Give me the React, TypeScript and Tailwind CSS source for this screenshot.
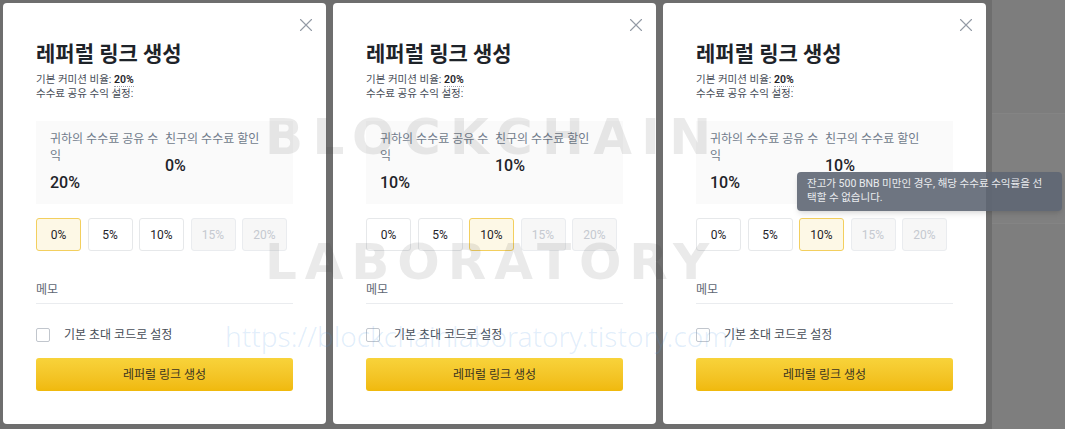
import React from 'react';

type PanelProps = {
    you: string;
    friend: string;
    selected: number;
};

const rates = ['0%', '5%', '10%', '15%', '20%'];

function CloseIcon() {
    return (
        <svg width="24" height="24" viewBox="0 0 24 24" className="absolute right-[8px] top-[10px]">
            <path d="M6.5 6.5L17.5 17.5M17.5 6.5L6.5 17.5" stroke="#939aa5" strokeWidth="1.1" strokeLinecap="round" />
        </svg>
    );
}

function Panel({ you, friend, selected }: PanelProps) {
    return (
        <div className="relative w-[323px] h-[421px] shrink-0 rounded-[4px] bg-white px-[33px] pt-[37px]">
            <CloseIcon />
            <h2 className="text-[21px] leading-[28px] font-bold text-[#1e2329]">레퍼럴 링크 생성</h2>
            <div className="mt-[5px] text-[10.5px] leading-[14px] text-[#474d57]">
                <p>
                    기본 커미션 비율:{' '}
                    <span className="font-semibold text-[#1e2329] border-b border-dotted border-[#9aa1ab]">20%</span>
                </p>
                <p>수수료 공유 수익 설정:</p>
            </div>

            {/* share summary */}
            <div className="mt-[20px] flex bg-[#fafafa] pl-[14px] pt-[10px] pb-[10px]">
                <div className="w-[115px] shrink-0 pr-[4px]">
                    <p className="break-all text-[12px] leading-[17px] text-[#707a8a]">귀하의 수수료 공유 수익</p>
                    <p className="mt-[7px] text-[16px] leading-[22px] font-medium text-[#1e2329]">{you}</p>
                </div>
                <div>
                    <p className="text-[12px] leading-[17px] text-[#707a8a]">친구의 수수료 할인</p>
                    <p className="mt-[7px] text-[16px] leading-[22px] font-medium text-[#1e2329]">{friend}</p>
                </div>
            </div>

            {/* rate buttons */}
            <div className="mt-[14px] flex gap-[6.5px]">
                {rates.map((r, i) => {
                    const disabled = i > 2;
                    const active = i === selected;
                    return (
                        <div
                            key={r}
                            className={
                                active
                                    ? 'w-[45px] h-[33px] rounded-[3px] border border-[#f3cf5e] bg-[#fdf8e6] flex items-center justify-center text-[12px] text-[#1e2329]'
                                    : disabled
                                    ? 'w-[45px] h-[33px] rounded-[3px] border border-[#eaecef] bg-[#f7f7f7] flex items-center justify-center text-[12px] text-[#c5c9d0]'
                                    : 'w-[45px] h-[33px] rounded-[3px] border border-[#e6e8ea] bg-white flex items-center justify-center text-[12px] text-[#1e2329]'
                            }
                        >
                            {r}
                        </div>
                    );
                })}
            </div>

            <div className="mt-[30px] pb-[4px] border-b border-[#eaecef] text-[12px] leading-[18px] text-[#5e6673]">메모</div>

            <div className="mt-[24px] flex items-center h-[14px]">
                <div className="w-[14px] h-[14px] rounded-[2px] border border-[#c1c6cd] bg-white" />
                <span className="ml-[14px] text-[12px] leading-[14px] text-[#474d57]">기본 초대 코드로 설정</span>
            </div>

            <button className="mt-[16px] w-full h-[33px] rounded-[3px] bg-gradient-to-b from-[#f8d33a] to-[#f0b90b] text-[12px] text-[#3a3320]">
                레퍼럴 링크 생성
            </button>
        </div>
    );
}

export default function App() {
    return (
        <div className="relative w-[1065px] h-[429px] overflow-hidden bg-[#6e6e6e] flex font-['Roboto','Noto_Sans_CJK_KR',sans-serif]">
            <div className="flex gap-[7px] pl-[3px] pt-[3px]">
                <Panel you="20%" friend="0%" selected={0} />
                <Panel you="10%" friend="10%" selected={2} />
                <Panel you="10%" friend="10%" selected={2} />
            </div>
            <div className="ml-[6px] flex-1 flex flex-col bg-[#7f7f7f]">
                <div className="h-[114px] border-b border-[#848484] bg-[#7d7d7d]" />
                <div className="h-[110px] border-b border-[#848484] bg-[#808080]" />
                <div className="flex-1 bg-[#7e7e7e]" />
            </div>

            {/* watermark */}
            <div className="pointer-events-none absolute left-[265px] top-[112px] text-[50px] leading-none font-bold tracking-[9.4px] text-[rgba(60,60,60,0.11)] font-['DejaVu_Sans',sans-serif] whitespace-nowrap">
                BLOCKCHAIN
            </div>
            <div className="pointer-events-none absolute left-[265px] top-[237px] text-[50px] leading-none font-bold tracking-[7.9px] text-[rgba(60,60,60,0.11)] font-['DejaVu_Sans',sans-serif] whitespace-nowrap">
                LABORATORY
            </div>
            <div className="pointer-events-none absolute left-[225px] top-[322px] text-[28px] leading-none font-light text-[rgba(70,150,230,0.16)] font-['Noto_Sans',sans-serif] whitespace-nowrap">
                https://blockchainlaboratory.tistory.com/
            </div>

            {/* tooltip */}
            <div className="absolute left-[797px] top-[172px] w-[265px] h-[39px] rounded-[4px] bg-[#5e6673]/90 px-[10px] pt-[5px] text-[10.5px] leading-[14px] text-[#eaecef] whitespace-nowrap shadow-md">
                잔고가 500 BNB 미만인 경우, 해당 수수료 수익률을 선
                <br />
                택할 수 없습니다.
            </div>
        </div>
    );
}
